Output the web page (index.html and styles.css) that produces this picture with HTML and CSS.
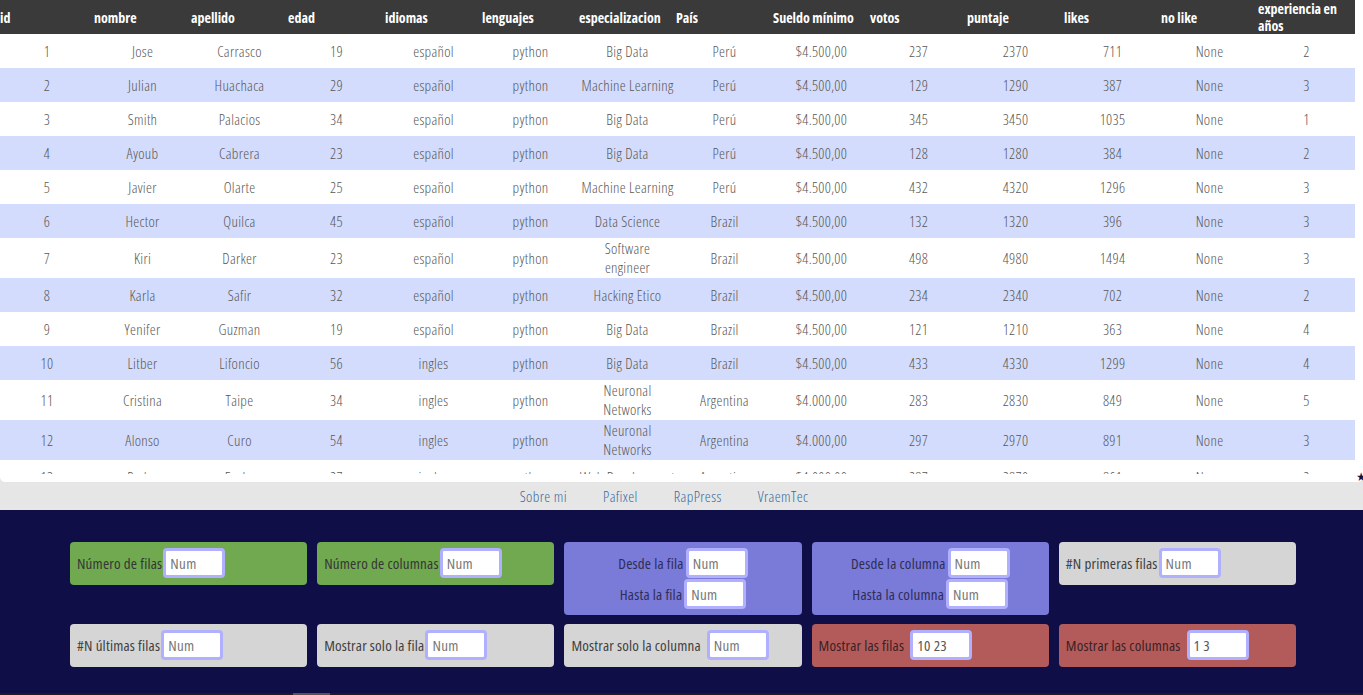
FILE: index.html
```html
<!DOCTYPE html>
<html lang="es">
<head>
<meta charset="utf-8">
<title>Tabla</title>
<link rel="stylesheet" href="styles.css">
</head>
<body>
<div class="table-wrap">
  <div class="table-scroll">
    <table class="data">
      <colgroup>
        <col class="c-first"><col><col><col><col><col><col><col><col><col><col><col><col><col>
      </colgroup>
      <thead>
        <tr>
          <th>id</th><th>nombre</th><th>apellido</th><th>edad</th><th>idiomas</th><th>lenguajes</th><th>especializacion</th><th>País</th><th>Sueldo mínimo</th><th>votos</th><th>puntaje</th><th>likes</th><th>no like</th><th>experiencia en años</th>
        </tr>
      </thead>
      <tbody id="rows">
        <tr><td>1</td><td>Jose</td><td>Carrasco</td><td>19</td><td>español</td><td>python</td><td>Big Data</td><td>Perú</td><td>$4.500,00</td><td>237</td><td>2370</td><td>711</td><td>None</td><td>2</td></tr>
        <tr><td>2</td><td>Julian</td><td>Huachaca</td><td>29</td><td>español</td><td>python</td><td>Machine Learning</td><td>Perú</td><td>$4.500,00</td><td>129</td><td>1290</td><td>387</td><td>None</td><td>3</td></tr>
        <tr><td>3</td><td>Smith</td><td>Palacios</td><td>34</td><td>español</td><td>python</td><td>Big Data</td><td>Perú</td><td>$4.500,00</td><td>345</td><td>3450</td><td>1035</td><td>None</td><td>1</td></tr>
        <tr><td>4</td><td>Ayoub</td><td>Cabrera</td><td>23</td><td>español</td><td>python</td><td>Big Data</td><td>Perú</td><td>$4.500,00</td><td>128</td><td>1280</td><td>384</td><td>None</td><td>2</td></tr>
        <tr><td>5</td><td>Javier</td><td>Olarte</td><td>25</td><td>español</td><td>python</td><td>Machine Learning</td><td>Perú</td><td>$4.500,00</td><td>432</td><td>4320</td><td>1296</td><td>None</td><td>3</td></tr>
        <tr><td>6</td><td>Hector</td><td>Quilca</td><td>45</td><td>español</td><td>python</td><td>Data Science</td><td>Brazil</td><td>$4.500,00</td><td>132</td><td>1320</td><td>396</td><td>None</td><td>3</td></tr>
        <tr><td>7</td><td>Kiri</td><td>Darker</td><td>23</td><td>español</td><td>python</td><td>Software<br>engineer</td><td>Brazil</td><td>$4.500,00</td><td>498</td><td>4980</td><td>1494</td><td>None</td><td>3</td></tr>
        <tr><td>8</td><td>Karla</td><td>Safir</td><td>32</td><td>español</td><td>python</td><td>Hacking Etico</td><td>Brazil</td><td>$4.500,00</td><td>234</td><td>2340</td><td>702</td><td>None</td><td>2</td></tr>
        <tr><td>9</td><td>Yenifer</td><td>Guzman</td><td>19</td><td>español</td><td>python</td><td>Big Data</td><td>Brazil</td><td>$4.500,00</td><td>121</td><td>1210</td><td>363</td><td>None</td><td>4</td></tr>
        <tr><td>10</td><td>Litber</td><td>Lifoncio</td><td>56</td><td>ingles</td><td>python</td><td>Big Data</td><td>Brazil</td><td>$4.500,00</td><td>433</td><td>4330</td><td>1299</td><td>None</td><td>4</td></tr>
        <tr><td>11</td><td>Cristina</td><td>Taipe</td><td>34</td><td>ingles</td><td>python</td><td>Neuronal<br>Networks</td><td>Argentina</td><td>$4.000,00</td><td>283</td><td>2830</td><td>849</td><td>None</td><td>5</td></tr>
        <tr><td>12</td><td>Alonso</td><td>Curo</td><td>54</td><td>ingles</td><td>python</td><td>Neuronal<br>Networks</td><td>Argentina</td><td>$4.000,00</td><td>297</td><td>2970</td><td>891</td><td>None</td><td>3</td></tr>
        <tr><td>13</td><td>Pedro</td><td>Fuchs</td><td>27</td><td>ingles</td><td>python</td><td>Web Development</td><td>Argentina</td><td>$4.000,00</td><td>287</td><td>2870</td><td>861</td><td>None</td><td>2</td></tr>
      </tbody>
    </table>
  </div>
  <span class="corner-star">★</span>
</div>

<nav class="links">
  <a href="#">Sobre mi</a>
  <a href="#">Pafixel</a>
  <a href="#">RapPress</a>
  <a href="#">VraemTec</a>
</nav>

<section class="controls">
  <div class="grid">
    <div class="card green"><label>Número de filas</label><input type="text" placeholder="Num"></div>
    <div class="card green"><label>Número de columnas</label><input type="text" placeholder="Num"></div>
    <div class="card purple">
      <div class="line"><label>Desde la fila</label><input type="text" placeholder="Num"></div>
      <div class="line"><label>Hasta la fila</label><input type="text" placeholder="Num"></div>
    </div>
    <div class="card purple">
      <div class="line"><label>Desde la columna</label><input type="text" placeholder="Num"></div>
      <div class="line"><label>Hasta la columna</label><input type="text" placeholder="Num"></div>
    </div>
    <div class="card gray"><label>#N primeras filas</label><input type="text" placeholder="Num"></div>

    <div class="card gray"><label>#N últimas filas</label><input type="text" placeholder="Num"></div>
    <div class="card gray"><label>Mostrar solo la fila</label><input type="text" placeholder="Num"></div>
    <div class="card gray"><label>Mostrar solo la columna</label><input class="spaced" type="text" placeholder="Num"></div>
    <div class="card red"><label>Mostrar las filas</label><input class="spaced" type="text" value="10 23"></div>
    <div class="card red"><label>Mostrar las columnas</label><input class="spaced" type="text" value="1 3"></div>
  </div>
</section>
<div class="bottom-bar"><span class="bar-seg"></span></div>
<script src="script.js"></script>
</body>
</html>
```
FILE: styles.css
```css
* { box-sizing: border-box; }
html, body { margin: 0; padding: 0; }
body {
  height: 695px;
  overflow: hidden;
  background: #e6e6e6;
  font-family: "Open Sans", "DejaVu Sans Condensed", sans-serif;
  font-stretch: 75%;
  font-size: 14px;
}

.table-wrap {
  position: relative;
  height: 482px;
  background: #fff;
  border-radius: 0 0 5px 5px;
}
.table-scroll {
  height: 474px;
  overflow-y: auto;
  overflow-x: hidden;
}
.table-scroll::-webkit-scrollbar { width: 8px; }
.table-scroll::-webkit-scrollbar-track { background: #fff; }
.table-scroll::-webkit-scrollbar-thumb { background: #3a3a3a; border-radius: 0 0 4px 4px; }

.corner-star {
  position: absolute;
  right: -3px;
  bottom: 0;
  font-size: 12px;
  line-height: 10px;
  color: #0f0e47;
}

.data {
  width: 1355px;
  table-layout: fixed;
  border-collapse: collapse;
}
.data col { width: 97px; }
.data col.c-first { width: 94px; }
.data th {
  background: #3a3a3a;
  color: #fff;
  font-weight: 700;
  text-align: left;
  height: 34px;
  padding: 0;
  line-height: 17px;
  vertical-align: middle;
}
.data td {
  height: 34px;
  padding: 1px 1px;
  line-height: 19px;
  font-size: 15px;
  letter-spacing: 0.3px;
  text-align: center;
  color: #575757;
  font-weight: 300;
  white-space: nowrap;
  overflow: hidden;
  vertical-align: middle;
}
.data tbody tr:nth-child(even) td { background: #d3dcfc; }

.links {
  height: 28px;
  display: flex;
  justify-content: center;
  align-items: center;
  gap: 36px;
  padding-right: 35px;
}
.links a {
  color: #36699e;
  text-decoration: none;
  font-size: 15px;
  letter-spacing: 0.4px;
  font-weight: 300;
}

.controls {
  height: 183px;
  background: #0f0e47;
  padding: 32px 67px 0 70px;
}
.grid {
  display: grid;
  grid-template-columns: repeat(5, 1fr);
  column-gap: 10px;
  row-gap: 9px;
  align-items: start;
}
.card {
  border-radius: 4px;
  padding: 6px 7px 7px;
  display: flex;
  align-items: center;
  gap: 1px;
  color: #363636;
  font-size: 15px;
  letter-spacing: 0.2px;
}
.card label { white-space: nowrap; }
.card.green { background: #70a950; }
.card.gray { background: #d5d5d5; color: #404040; }
.card.red { background: #b35b5b; color: #3a2222; }
.card.purple {
  background: #7a7ad9;
  color: #2e2e55;
  flex-direction: column;
  padding: 6px 7px 6px;
  gap: 1px;
}
.card .line {
  display: flex;
  align-items: center;
  justify-content: center;
  gap: 2px;
}
.card input {
  width: 62px;
  height: 30px;
  border: 3px solid #b0b0ff;
  border-radius: 4px;
  background: #fff;
  padding: 0 4px;
  font-family: inherit;
  font-stretch: 75%;
  font-size: 15px;
  letter-spacing: 0.3px;
  color: #555;
  outline: none;
}
.card input.spaced { margin-left: 5px; }
.card input::placeholder { color: #777; }

.bottom-bar {
  height: 2px;
  background: #1f1c24;
  display: flex;
}
.bar-seg {
  width: 37px;
  margin-left: 293px;
  background: #555;
}
```
FILE: script.js
```js
(function () {
  var names = ["Luis", "Maria", "Carlos", "Ana", "Jorge", "Rosa", "Pablo", "Lucia", "Diego", "Sofia", "Miguel", "Elena"];
  var last = ["Rojas", "Mendoza", "Flores", "Vargas", "Quispe", "Torres", "Ramos", "Castro", "Silva", "Gomez"];
  var esp = ["Big Data", "Data Science", "Machine Learning", "Hacking Etico", "Big Data"];
  var pais = ["Argentina", "Chile", "Colombia", "México", "Perú"];
  var body = document.getElementById("rows");
  for (var i = 14; i <= 115; i++) {
    var votos = 100 + ((i * 37) % 400);
    var cells = [i, names[i % names.length], last[i % last.length], 19 + (i * 7) % 40,
      i % 3 ? "ingles" : "español", "python", esp[i % esp.length], pais[i % pais.length],
      "$4.000,00", votos, votos * 10, votos * 3, "None", 1 + i % 5];
    var tr = document.createElement("tr");
    for (var j = 0; j < cells.length; j++) {
      var td = document.createElement("td");
      td.textContent = cells[j];
      tr.appendChild(td);
    }
    body.appendChild(tr);
  }
})();
```
